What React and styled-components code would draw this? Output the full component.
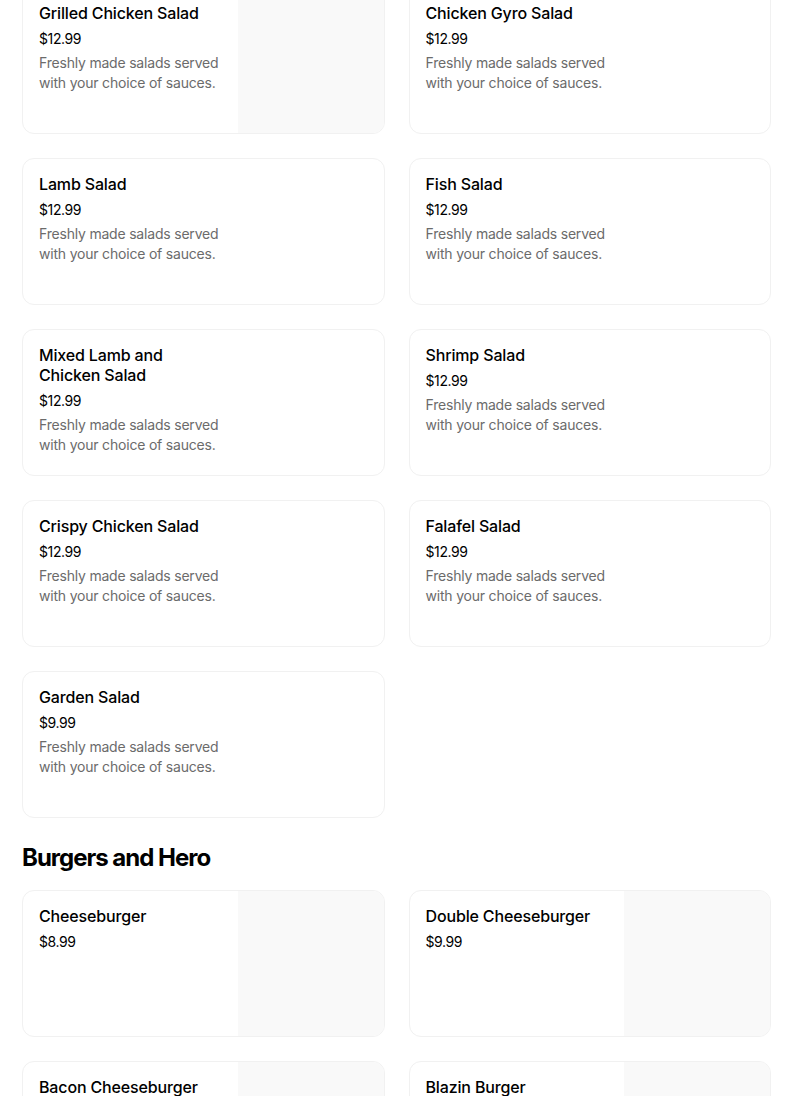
import React from "react";
import styled, { createGlobalStyle } from "styled-components";

const GlobalStyle = createGlobalStyle`
  html, body {
    margin: 0;
    padding: 0;
    background: #ffffff;
    overflow: hidden;
  }
  body {
    font-family: Inter, "Noto Sans", "Liberation Sans", sans-serif;
    color: #000000;
    -webkit-font-smoothing: antialiased;
  }
`;

const Page = styled.main`
  width: 749px;
  padding: 0 33px 0 22px;
  margin-top: -13px;
  display: flex;
  flex-direction: column;
`;

const Section = styled.section`
  display: flex;
  flex-direction: column;
`;

const SectionTitle = styled.h2`
  margin: 24px 0 16px;
  font-size: 24px;
  line-height: 32px;
  font-weight: 700;
  letter-spacing: -1px;
  color: #000000;
`;

const Grid = styled.div`
  display: grid;
  grid-template-columns: 1fr 1fr;
  column-gap: 24px;
  row-gap: 24px;
`;

const Card = styled.article`
  display: grid;
  grid-template-columns: 1fr 146px;
  height: 147px;
  box-sizing: border-box;
  border: 1px solid #f1f1f1;
  border-radius: 12px;
  overflow: hidden;
  background: #ffffff;
`;

const Info = styled.div`
  display: flex;
  flex-direction: column;
  padding: 15px 16px 16px 16px;
  min-width: 0;
`;

const ItemName = styled.h3`
  margin: 0 0 6px;
  font-size: 16px;
  line-height: 20px;
  font-weight: 500;
  color: #000000;
  letter-spacing: -0.15px;
`;

const Price = styled.div`
  font-size: 14px;
  line-height: 20px;
  font-weight: 400;
  color: #000000;
  letter-spacing: -0.4px;
  margin-bottom: 4px;
`;

const Description = styled.p`
  margin: 0;
  font-size: 14px;
  line-height: 20px;
  color: #6b6b6b;
  letter-spacing: -0.2px;
`;

const Media = styled.div`
  background: ${(p) => (p.$empty ? "transparent" : "#f9f9f9")};
`;

const DESC = "Freshly made salads served with your choice of sauces.";

const salads = [
  { name: "Grilled Chicken Salad", price: "$12.99", desc: DESC, image: true },
  { name: "Chicken Gyro Salad", price: "$12.99", desc: DESC },
  { name: "Lamb Salad", price: "$12.99", desc: DESC },
  { name: "Fish Salad", price: "$12.99", desc: DESC },
  { name: "Mixed Lamb and Chicken Salad", price: "$12.99", desc: DESC },
  { name: "Shrimp Salad", price: "$12.99", desc: DESC },
  { name: "Crispy Chicken Salad", price: "$12.99", desc: DESC },
  { name: "Falafel Salad", price: "$12.99", desc: DESC },
  { name: "Garden Salad", price: "$9.99", desc: DESC },
];

const burgers = [
  { name: "Cheeseburger", price: "$8.99", image: true },
  { name: "Double Cheeseburger", price: "$9.99", image: true },
  { name: "Bacon Cheeseburger", price: "$10.99", image: true },
  { name: "Blazin Burger", price: "$10.99", image: true },
];

function MenuCard({ item }) {
  return (
    <Card>
      <Info>
        <ItemName>{item.name}</ItemName>
        <Price>{item.price}</Price>
        {item.desc && <Description>{item.desc}</Description>}
      </Info>
      <Media $empty={!item.image} />
    </Card>
  );
}

export default function App() {
  return (
    <>
      <GlobalStyle />
      <Page>
        <Section>
          <Grid>
            {salads.map((item) => (
              <MenuCard key={item.name} item={item} />
            ))}
          </Grid>
        </Section>
        <Section>
          <SectionTitle>Burgers and Hero</SectionTitle>
          <Grid>
            {burgers.map((item) => (
              <MenuCard key={item.name} item={item} />
            ))}
          </Grid>
        </Section>
      </Page>
    </>
  );
}
